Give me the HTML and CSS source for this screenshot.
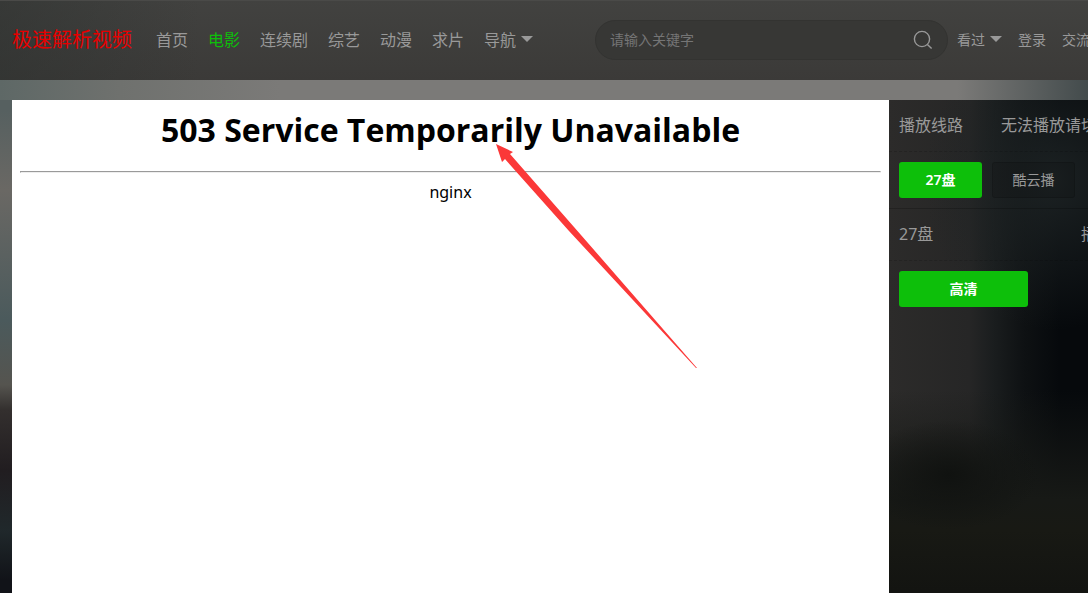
FILE: index.html
```
<!DOCTYPE html>
<html lang="zh-CN">
<head>
    <meta charset="UTF-8">
    <meta name="viewport" content="width=device-width, initial-scale=1.0">
    <title>极速解析视频</title>
    <link rel="stylesheet" href="styles.css">
</head>
<body>
    <header class="header">
        <a class="logo" href="#">极速解析视频</a>
        <nav class="nav">
            <a href="#">首页</a>
            <a href="#" class="active">电影</a>
            <a href="#">连续剧</a>
            <a href="#">综艺</a>
            <a href="#">动漫</a>
            <a href="#">求片</a>
            <a href="#" class="dropdown">导航</a>
        </nav>
        <form class="search">
            <input type="text" class="search-input" placeholder="请输入关键字" aria-label="请输入关键字">
            <button type="button" class="search-button" aria-label="搜索">
                <svg width="20" height="20" viewBox="0 0 20 20" fill="none" stroke="#999" stroke-width="1.4">
                    <circle cx="9" cy="9" r="7.6"/>
                    <path d="M14.4 14.4L18.6 18.6"/>
                </svg>
            </button>
        </form>
        <div class="user-menu">
            <a href="#" class="dropdown">看过</a>
            <a href="#">登录</a>
            <a href="#">交流</a>
        </div>
    </header>

    <main class="play">
        <section class="player">
            <h1>503 Service Temporarily Unavailable</h1>
            <hr>
            <p>nginx</p>
            <svg class="arrow" width="202" height="225" viewBox="0 0 202 225">
                <path fill="#fb3838" d="M0 0L17 8L14 10L78 83L201 224L200 224L73 87L9 15L6 18Z"/>
            </svg>
        </section>

        <aside class="sidebar">
            <div class="panel-title">
                <h2>播放线路</h2>
                <span>无法播放请切</span>
            </div>
            <div class="lines">
                <button class="line-button active">27盘</button>
                <button class="line-button">酷云播</button>
            </div>
            <div class="panel-title spread">
                <h2>27盘</h2>
                <span>播</span>
            </div>
            <div class="episodes">
                <button class="line-button active">高清</button>
            </div>
        </aside>
    </main>
</body>
</html>
```

FILE: styles.css
```
* {
    box-sizing: border-box;
}
body {
    margin: 0;
    min-height: 100vh;
    display: flex;
    flex-direction: column;
    overflow: hidden;
    font-family: "Noto Sans", "Noto Sans CJK SC", sans-serif;
    font-size: 16px;
    color: #999;
    background:
        linear-gradient(to right, #5e6866, #6f716e 120px, #7b7a78 280px, #7b7a78 88%, #434b4c) top / 100% 100px no-repeat,
        linear-gradient(#566060 110px, #6a6864 190px, #4b5a5c 320px, #55544f 385px, #332f2e 410px, #211d20 470px, #20282b 530px, #111318 580px);
}
a {
    color: inherit;
    text-decoration: none;
}
button {
    font-family: inherit;
    cursor: pointer;
}

/* header */
.header {
    display: flex;
    align-items: center;
    height: 80px;
    padding-left: 12px;
    overflow: hidden;
    white-space: nowrap;
    box-shadow: inset 0 1px #4a4a48;
    background: linear-gradient(to right, rgba(44, 48, 46, 0.5), rgba(60, 60, 58, 0) 200px), linear-gradient(#424240, #3b3a38);
}
.logo {
    flex-shrink: 0;
    margin-right: 24px;
    padding-bottom: 4px;
    font-size: 20px;
    color: #e60000;
}
.nav {
    display: flex;
    flex-shrink: 0;
    gap: 20px;
    padding-bottom: 2px;
}
.nav .active {
    color: #0dbf0a;
}
.dropdown {
    display: flex;
    align-items: center;
    gap: 5px;
}
.dropdown::after {
    content: "";
    border: 6px solid transparent;
    border-top-color: #999;
    border-bottom: 0;
}
.search {
    display: flex;
    flex: 1;
    align-items: center;
    height: 40px;
    margin-left: 62px;
    padding: 0 14px;
    border: 1px solid #333331;
    border-radius: 20px;
    background: #373735;
}
.search-input {
    flex: 1;
    min-width: 0;
    padding: 0 0 2px;
    border: 0;
    outline: 0;
    font-family: inherit;
    font-size: 14px;
    color: #999;
    background: none;
}
.search-input::placeholder {
    color: #757575;
}
.search-button {
    display: flex;
    padding: 0;
    border: 0;
    background: none;
}
.user-menu {
    display: flex;
    flex-shrink: 0;
    gap: 16px;
    width: 140px;
    padding: 0 0 2px 9px;
    font-size: 14px;
}

/* player and sidebar */
.play {
    display: flex;
    flex: 1;
    padding: 20px 0 0 12px;
}
.player {
    position: relative;
    flex: 1;
    padding: 8px;
    text-align: center;
    color: #000;
    background: #fff;
}
.player h1 {
    margin: 0 0 19px;
    font-family: "Open Sans", "Noto Sans", sans-serif;
    font-size: 32px;
    font-weight: 700;
    line-height: 44px;
}
.player hr {
    margin: 0;
}
.player p {
    margin: 8px 0;
    line-height: 22px;
}
.arrow {
    position: absolute;
    left: 484px;
    top: 44px;
}
.sidebar {
    width: 199px;
    overflow: hidden;
    white-space: nowrap;
    background:
        radial-gradient(ellipse 90px 55px at 60px 375px, #101210, transparent),
        linear-gradient(transparent 290px, #171916 400px, #181914 430px, #131411 490px),
        radial-gradient(ellipse 130px 150px at 165px 80px, rgba(30, 36, 37, 0.9), transparent),
        linear-gradient(to right, #2c2b2a, #262626 80px, #1a1d1e 105px, #0e1113 135px, #06090c 170px);
}
.panel-title {
    display: grid;
    grid-template-columns: 102px auto;
    align-items: center;
    height: 52px;
    padding: 0 0 4px 10px;
    border-bottom: 1px dashed rgba(0, 0, 0, 0.15);
}
.panel-title.spread {
    grid-template-columns: 182px auto;
}
.panel-title h2 {
    margin: 0;
    font-size: 16px;
    font-weight: 400;
}
.lines,
.episodes {
    display: grid;
    grid-template-columns: 83px 83px;
    gap: 10px;
    padding: 10px;
}
.lines {
    border-bottom: 1px solid rgba(0, 0, 0, 0.2);
}
.episodes {
    grid-template-columns: 129px;
}
.line-button {
    height: 36px;
    padding: 0 0 2px;
    border: 1px solid rgba(0, 0, 0, 0.15);
    border-radius: 3px;
    font-size: 14px;
    color: #999;
    background: rgba(0, 0, 0, 0.1);
}
.line-button.active {
    border: 0;
    font-weight: 600;
    color: #fff;
    background: #0dbf0a;
}
```
